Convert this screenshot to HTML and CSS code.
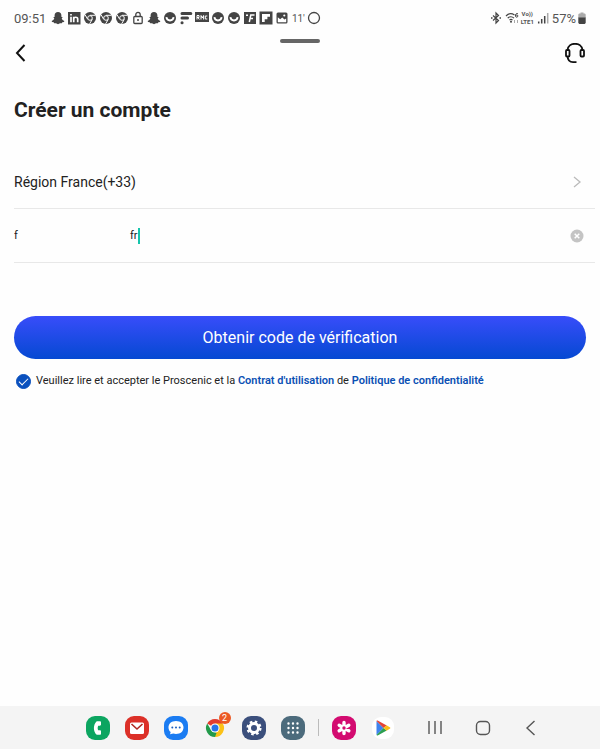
FILE: index.html
```html
<!DOCTYPE html>
<html lang="fr">
<head>
    <meta charset="UTF-8">
    <meta name="viewport" content="width=device-width, initial-scale=1.0">
    <title>Créer un compte</title>
    <link rel="stylesheet" href="styles.css">
</head>
<body>
    <!-- Icônes réutilisées dans la barre d'état -->
    <svg class="sprite" aria-hidden="true">
        <symbol id="snap" viewBox="0 0 14 14">
            <path fill="currentColor" d="M7 1c2.200 0 3.400 1.500 3.400 3.400v1.500l1.300.1-1 1.400c.5 1.300 1.300 2 2.600 2.500l-.3 1-1.700.4-.5 1-1.800-.1L7 13.200l-2-1-1.800.1-.5-1L1 10.900l-.3-1C2 9.400 2.800 8.700 3.300 7.400L2.300 6l1.300-.1V4.400C3.600 2.500 4.800 1 7 1z"/>
        </symbol>
        <symbol id="chrome-mono" viewBox="0 0 14 14">
            <circle cx="7" cy="7" r="6" fill="currentColor"/>
            <path fill="none" stroke="#fff" d="M7 4.300h5.400M4.700 8.300 2 3.700M9.300 8.300l-2.700 4.600"/>
            <circle cx="7" cy="7" r="2.300" fill="currentColor" stroke="#fff"/>
        </symbol>
        <symbol id="smile" viewBox="0 0 14 14">
            <circle cx="7" cy="7" r="6" fill="currentColor"/>
            <path fill="none" stroke="#fff" stroke-width="1.800" d="M3.400 6.200c.4 4.400 6.800 4.400 7.200 0"/>
        </symbol>
    </svg>

    <header class="status-bar">
        <time>09:51</time>
        <div class="notifications">
            <svg><use href="#snap"/></svg>
            <svg viewBox="0 0 14 14">
                <rect x="1" y="1" width="12.500" height="12.500" fill="currentColor"/>
                <path fill="none" stroke="#fff" stroke-width="1.700" d="M4 5.700v5.500M4 3v1.600M6.700 11.200V5.700M6.700 8c0-2.200 4-2.400 4 0v3.200"/>
            </svg>
            <svg><use href="#chrome-mono"/></svg>
            <svg><use href="#chrome-mono"/></svg>
            <svg><use href="#chrome-mono"/></svg>
            <svg viewBox="0 0 14 14">
                <rect x="2.800" y="5.500" width="8.400" height="7" rx="1" fill="none" stroke="currentColor" stroke-width="1.300"/>
                <path fill="none" stroke="currentColor" stroke-width="1.300" d="M4.800 5.500V3.600c0-3 4.400-3 4.400 0v1.900"/>
                <circle cx="7" cy="9" r="1" fill="currentColor"/>
            </svg>
            <svg><use href="#snap"/></svg>
            <svg><use href="#smile"/></svg>
            <svg viewBox="0 0 14 14">
                <path fill="none" stroke="currentColor" stroke-width="3" stroke-linecap="round" d="M3 2.500h8.800M3 7h5.500M3 11.700h.1"/>
            </svg>
            <svg viewBox="0 0 14 14">
                <rect y="1" width="14" height="10" fill="currentColor"/>
                <path fill="none" stroke="#fff" d="M2 8.500v-4h2v2H2m1 0 1.300 2M6 8.500v-4L7.300 7l1.300-2.500v4M12.300 5h-2v3h2"/>
            </svg>
            <svg><use href="#smile"/></svg>
            <svg><use href="#smile"/></svg>
            <svg viewBox="0 0 14 14">
                <rect x="1" y="1" width="12" height="12" fill="currentColor"/>
                <path fill="none" stroke="#fff" stroke-width="1.500" d="M3 4.200h2M11.500 4H7.800l-1.500 7M6.500 7.400H10"/>
            </svg>
            <svg viewBox="0 0 14 14">
                <rect x=".500" y=".500" width="13" height="13" fill="currentColor"/>
                <path fill="#fff" d="M3 3h8v2.700H8.400v2.600H5.700V11H3z"/>
            </svg>
            <svg viewBox="0 0 14 14">
                <rect x="1.500" y="1.500" width="11" height="11" rx="1.500" fill="currentColor"/>
                <path fill="#fff" d="M2.800 6.200l2.400 2 2-1.800 2.300 2 1.700-1v3.800H2.800z"/>
                <circle cx="9.300" cy="4.500" r="1.100" fill="#fff"/>
            </svg>
            <span class="minutes">11'</span>
            <svg viewBox="0 0 14 14"><circle cx="7" cy="7" r="5.500" fill="none" stroke="currentColor" stroke-width="1.300"/></svg>
        </div>
        <div class="signals">
            <svg viewBox="0 0 14 14">
                <path fill="none" stroke="currentColor" stroke-width="1.200" d="M4 4.500l5.500 5L7 12V2l2.500 2.500-5.500 5"/>
                <path fill="currentColor" d="M2 6.300h1.500v1.500H2zM10.500 6.300H12v1.500h-1.500z"/>
            </svg>
            <svg viewBox="0 0 14 14">
                <path fill="none" stroke="currentColor" stroke-width="1.200" d="M1 5c2.500-2.700 6-2.700 8.500-1M2.700 7.200c1.800-1.800 4.500-1.800 6.300 0M4.500 9.200c1-1 2-1 3 0"/>
                <path fill="none" stroke="currentColor" d="M12.800 2.500c-2-.5-2.300 1-2.300 2.500 0 1.700 2.400 1.500 2.400 0s-1.800-1.400-2.300-.2"/>
                <path fill="none" stroke="#aaa" d="M9.500 9v3M12.500 12V9"/>
                <circle cx="6" cy="10.800" r="1" fill="currentColor"/>
            </svg>
            <span class="network"><span>Vo))</span><span>LTE1</span></span>
            <svg viewBox="0 0 14 14">
                <path fill="none" stroke="currentColor" stroke-width="1.500" d="M2.700 12.500v-2M5.700 12.500V8M8.700 12.500V5"/>
                <path fill="none" stroke="#aaa" stroke-width="1.500" d="M11.700 12.500V2"/>
            </svg>
            <span>57%</span>
            <svg class="battery" viewBox="0 0 8 14">
                <path fill="#aaa" d="M2.500 1.500h3v1H7l.7 1V7H.3V3.500l.7-1h1.500z"/>
                <path fill="currentColor" d="M.3 6.500h7.400V12l-1 1H1.300l-1-1z"/>
            </svg>
        </div>
    </header>

    <div class="handle"></div>

    <nav class="top-nav">
        <a href="#" aria-label="Retour">
            <svg viewBox="0 0 22 22"><path fill="none" stroke="#111" stroke-width="2" d="M10.500 2 3 10l7.500 8"/></svg>
        </a>
        <a href="#" aria-label="Assistance">
            <svg viewBox="0 0 22 22" fill="none" stroke="#111" stroke-width="1.800">
                <path d="M3.500 7C4.500-1.300 17.500-1.300 18.500 7M3.500 13c.2 4 2.500 6.200 5.500 6.200h3.500"/>
                <rect x="2" y="7" width="3.500" height="6.500" rx="1"/>
                <rect x="16.500" y="7" width="3.500" height="6.500" rx="1"/>
            </svg>
        </a>
    </nav>

    <main>
        <h1>Créer un compte</h1>
        <form>
            <button type="button" class="row region">
                <span>Région France(+33)</span>
                <svg viewBox="0 0 14 14"><path fill="none" stroke="#bbb" stroke-width="1.300" d="M4 2l6 5-6 5"/></svg>
            </button>
            <div class="row">
                <div class="email">
                    <input type="text" aria-label="E-mail" value="f&emsp;&emsp;&emsp;&emsp;&emsp;&emsp;&emsp;&emsp;&emsp;&emsp;fr">
                    <span class="caret"></span>
                </div>
                <button type="reset" class="clear" aria-label="Effacer">
                    <svg viewBox="0 0 14 14"><circle cx="7" cy="7" r="6.500" fill="#c4c4c4"/><path stroke="#fff" stroke-width="1.500" d="M4.700 4.700l4.600 4.600M9.300 4.700 4.700 9.300"/></svg>
                </button>
            </div>
            <button type="button" class="submit">Obtenir code de vérification</button>
            <div class="agreement">
                <input type="checkbox" id="agree" checked>
                <label for="agree">Veuillez lire et accepter le Proscenic et la <a href="#">Contrat d'utilisation</a> de <a href="#">Politique de confidentialité</a></label>
            </div>
        </form>
    </main>

    <footer class="taskbar">
        <div class="apps">
            <button aria-label="Téléphone">
                <svg viewBox="0 0 24 24"><rect width="24" height="24" rx="9" fill="#0ca560"/><path fill="#fff" d="M10.700 5.200h3.100c.8 0 1.200.5 1.200 1.100v2.300c0 .7-.4 1.100-1.200 1.100h-1.600c-.7 1.500-.7 3 0 4.600h1.600c.8 0 1.200.4 1.200 1.100v2.300c0 .7-.4 1.100-1.200 1.100h-3.100C7 15.500 7 8.500 10.700 5.200z"/></svg>
            </button>
            <button aria-label="E-mail">
                <svg viewBox="0 0 24 24"><rect width="24" height="24" rx="9" fill="#dc3028"/><rect x="5" y="6.500" width="14" height="11.500" rx="1.500" fill="#fff"/><path fill="none" stroke="#b02822" stroke-width="1.600" d="M6.500 8l5.500 5 5.500-5"/></svg>
            </button>
            <button aria-label="Messages">
                <svg viewBox="0 0 24 24"><rect width="24" height="24" rx="9" fill="#1b7cf2"/><path fill="#fff" d="M12 5c4.600 0 7.500 2.800 7.500 6.500S16.600 18 12 18c-1 0-2-.1-2.800-.4L6 18.300l.7-2.200C5.200 14.900 4.500 13.400 4.500 11.500 4.500 7.800 7.400 5 12 5z"/><path stroke="#1b5fc0" stroke-width="2" stroke-linecap="round" d="M8.300 11.500h0M12 11.500h0M15.700 11.500h0"/></svg>
            </button>
            <button aria-label="Chrome">
                <svg viewBox="0 0 24 24">
                    <path fill="#e33b2e" d="M12 12 4.200 7.500a9 9 0 0 1 15.600 0z"/>
                    <path fill="#fbc116" d="M12 12V7.500h7.800A9 9 0 0 1 12 21z"/>
                    <path fill="#229a4a" d="M4.200 7.500 8 14l4 2.300L13.500 17 12 21A9 9 0 0 1 4.200 7.500z"/>
                    <circle cx="12" cy="12" r="4.500" fill="#fff"/><circle cx="12" cy="12" r="3.500" fill="#2773e8"/>
                </svg>
                <span class="badge">2</span>
            </button>
            <button aria-label="Paramètres">
                <svg viewBox="0 0 24 24"><rect width="24" height="24" rx="9" fill="#3b4f7c"/><circle cx="12" cy="12" r="6.300" fill="none" stroke="#fff" stroke-width="2.500" stroke-dasharray="2.500 2.448"/><circle cx="12" cy="12" r="4.500" fill="none" stroke="#fff" stroke-width="3"/></svg>
            </button>
            <button aria-label="Applications">
                <svg viewBox="0 0 24 24"><rect width="24" height="24" rx="9" fill="#4c6b7c"/><path stroke="#fff" stroke-width="2.400" stroke-linecap="round" d="M7.500 7.500h0M12 7.500h0M16.500 7.500h0M7.500 12h0M12 12h0M16.500 12h0M7.500 16.500h0M12 16.500h0M16.500 16.500h0"/></svg>
            </button>
        </div>
        <div class="separator"></div>
        <div class="apps">
            <button aria-label="Galerie">
                <svg viewBox="0 0 24 24"><rect width="24" height="24" rx="9" fill="#d30b70"/><path stroke="#fff" stroke-width="3.400" stroke-linecap="round" d="M12 6.500v11M7.200 9.200l9.600 5.600M16.800 9.200l-9.600 5.600"/><circle cx="12" cy="12" r="1.700" fill="#d30b70"/></svg>
            </button>
            <button aria-label="Play Store">
                <svg viewBox="0 0 24 24">
                    <rect x="1" y="1" width="22" height="22" rx="9" fill="#fff"/>
                    <path fill="#3f83ee" d="M5.500 5v14l7-7z"/>
                    <path fill="#e44336" d="M5.500 5c.5-.6 1-.5 1.600-.2l8.600 4.700L12.500 12z"/>
                    <path fill="#2c9e50" d="M5.500 19c.5.600 1 .5 1.600.2l8.600-4.700L12.500 12z"/>
                    <path fill="#fabd17" d="M15.500 9.300l3.300 1.900c.7.400.7 1.200 0 1.600l-3.300 1.900-3-2.700z"/>
                </svg>
            </button>
        </div>
        <div class="system-nav">
            <button aria-label="Récents">
                <svg viewBox="0 0 24 24"><path stroke="#555" stroke-width="1.400" d="M6 5v13M12 5v13M18 5v13"/></svg>
            </button>
            <button aria-label="Accueil">
                <svg viewBox="0 0 24 24"><rect x="5.500" y="5.500" width="13" height="13" rx="4" fill="none" stroke="#555" stroke-width="1.400"/></svg>
            </button>
            <button aria-label="Précédent">
                <svg viewBox="0 0 24 24"><path fill="none" stroke="#555" stroke-width="1.400" d="M15.500 5 8 12l7.500 7"/></svg>
            </button>
        </div>
    </footer>
</body>
</html>
```

FILE: styles.css
```css
* {
    margin: 0;
    padding: 0;
    box-sizing: border-box;
}

body {
    display: flex;
    flex-direction: column;
    min-height: 100vh;
    font-family: Roboto, 'Liberation Sans', sans-serif;
    color: #222;
    background-color: #fefefe;
}

button {
    border: none;
    background: none;
    font: inherit;
    color: inherit;
    cursor: pointer;
}

svg {
    display: block;
    flex: none;
}

.sprite {
    position: absolute;
    width: 0;
    height: 0;
}

/* Barre d'état */
.status-bar {
    display: flex;
    align-items: center;
    height: 36px;
    padding: 0 14px;
    font-size: 13px;
    color: #555;
}

.status-bar svg {
    width: 14px;
    height: 14px;
    color: #444;
}

.notifications {
    display: flex;
    align-items: center;
    gap: 2px;
    margin-left: 5px;
}

.minutes {
    width: 14px;
    font-size: 10px;
    text-align: center;
}

.signals {
    display: flex;
    align-items: center;
    gap: 2px;
    margin-left: auto;
}

.network {
    display: flex;
    flex-direction: column;
    font-size: 6px;
    font-weight: bold;
    line-height: 8px;
    text-align: center;
}

.status-bar .battery {
    width: 8px;
}

.handle {
    width: 40px;
    height: 4px;
    margin: 3px auto 0;
    border-radius: 2px;
    background-color: #666;
}

.top-nav {
    display: flex;
    justify-content: space-between;
    padding: 0 14px;
}

.top-nav svg {
    width: 22px;
    height: 22px;
}

/* Formulaire */
main {
    flex: 1;
    padding: 0 14px;
}

h1 {
    margin-top: 31px;
    font-size: 21px;
    line-height: 28px;
}

form {
    margin-top: 31px;
}

.row {
    display: flex;
    align-items: center;
    justify-content: space-between;
    width: calc(100% + 9px);
    height: 54px;
    padding-right: 11px;
    border-bottom: 1px solid #e8e8e8;
}

.row svg {
    width: 14px;
    height: 14px;
}

.region {
    font-size: 14px;
}

.email {
    display: flex;
    align-items: center;
}

.email input {
    field-sizing: content;
    border: none;
    outline: none;
    background: none;
    font: inherit;
    font-size: 11px;
    color: inherit;
}

.caret {
    width: 2px;
    height: 16px;
    background-color: #16c5ac;
}

.submit {
    display: block;
    width: 100%;
    height: 43px;
    margin-top: 53px;
    border-radius: 22px;
    background: linear-gradient(#384dfa, #0549d2);
    color: #fff;
    font-size: 16px;
}

.agreement {
    display: flex;
    align-items: center;
    gap: 5px;
    margin-top: 14px;
    padding-left: 2px;
    font-size: 11px;
    line-height: 16px;
}

.agreement input {
    display: grid;
    place-items: center;
    appearance: none;
    flex: none;
    width: 15px;
    height: 15px;
    border: 1px solid #0a50be;
    border-radius: 50%;
}

.agreement input:checked {
    background-color: #0a50be;
}

.agreement input:checked::before {
    content: "";
    width: 8px;
    height: 4px;
    margin-bottom: 2px;
    border: solid #fff;
    border-width: 0 0 1px 1px;
    transform: rotate(-45deg);
}

.agreement a {
    color: #0a50b4;
    font-weight: 600;
    text-decoration: none;
}

/* Barre des tâches */
.taskbar {
    display: flex;
    align-items: center;
    justify-content: center;
    gap: 13px;
    height: 43px;
    padding-left: 28px;
    background-color: #f4f4f4;
}

.taskbar svg {
    width: 24px;
    height: 24px;
}

.apps {
    display: flex;
    gap: 15px;
}

.apps button {
    position: relative;
}

.badge {
    position: absolute;
    top: -4px;
    right: -4px;
    width: 12px;
    height: 12px;
    border-radius: 50%;
    background-color: #ec5a24;
    color: #fff;
    font-size: 9px;
    line-height: 12px;
}

.separator {
    width: 1px;
    height: 17px;
    background-color: #bbb;
}

.system-nav {
    display: flex;
    gap: 24px;
    margin-left: 15px;
}
```
